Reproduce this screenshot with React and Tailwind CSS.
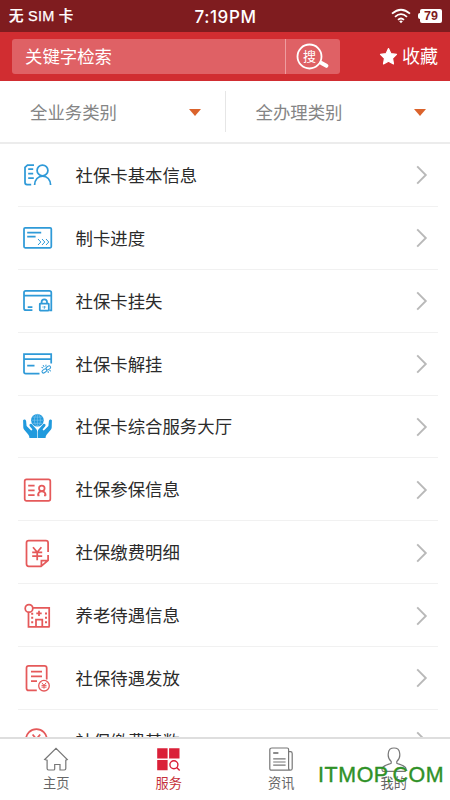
import React, { useState } from 'react';

const services = [
  { name: '社保卡基本信息', icon: 'profile' },
  { name: '制卡进度', icon: 'progress' },
  { name: '社保卡挂失', icon: 'lock' },
  { name: '社保卡解挂', icon: 'unlink' },
  { name: '社保卡综合服务大厅', icon: 'hands' },
  { name: '社保参保信息', icon: 'idcard' },
  { name: '社保缴费明细', icon: 'bill' },
  { name: '养老待遇信息', icon: 'building' },
  { name: '社保待遇发放', icon: 'payout' },
  { name: '社保缴费基数', icon: 'base' },
];

const blueIcons = {
  profile: (
    <>
      <path d="M12 6H5.5L3 8.3v15.2q0 2 2 2h4.2" />
      <path d="M6.2 10.2h5M6.2 14.7h5M6.2 19.2h5.6" />
      <circle cx="20.5" cy="11.4" r="5.4" />
      <path d="M12.6 26c0-5.3 3.6-9 8-9s8 3.7 8 9" />
    </>
  ),
  progress: (
    <>
      <rect x="2" y="5.8" width="27.3" height="20" rx="1.2" />
      <path d="M5.2 10.5h14M5.2 14.6h8.4" />
      <path strokeWidth="1" d="M16 17l2.8 3-2.8 3M20 17l2.8 3-2.8 3M24 17l2.8 3-2.8 3" />
    </>
  ),
  lock: (
    <>
      <path d="M10.4 25.2H4q-2 0-2-2V7.5q0-1.7 1.7-1.7h23.6q2 0 2 2v17.6h-2M2 10.6h27.3M5.7 22h4.7" />
      <rect x="17.8" y="18.6" width="9" height="7" rx=".5" />
      <path d="M19.6 18.5v-1.4a2.7 2.7 0 0 1 5.4 0v1.4" />
      <path strokeWidth="1" d="M20.5 22h.8M23.3 22h.8M22.3 21v2.7" />
    </>
  ),
  unlink: (
    <>
      <path d="M17.5 25.6H3.7Q2 25.6 2 24V6h27.2v9.4M2 11h27.2M5.2 17.6h7.3" />
      <g strokeWidth="1">
        <rect x="19.8" y="21.4" width="5.2" height="3" rx="1.5" transform="rotate(-35 22.4 22.9)" />
        <rect x="23.8" y="18.4" width="5" height="3" rx="1.5" transform="rotate(-35 26.3 19.9)" />
        <path d="M21 17l1.2 2M19.5 19.4l1.7.5M24 16.7l-.2 1.8M26 23l.3 2M27.4 22.4l1.6.7" />
      </g>
    </>
  ),
  hands: (
    <g fill="#209add" stroke="none">
      <circle cx="15.4" cy="9.2" r="6.3" />
      <g fill="none" stroke="#8bcaf0" strokeWidth=".55">
        <path d="M9.5 9.2h11.8M10.5 6.1h9.8M10.5 12.3h9.8M15.4 3.3v11.8" />
        <ellipse cx="15.4" cy="9.2" rx="3" ry="6" />
      </g>
      <path d="M1.1 9.2c.9-1.2 2.9-.6 3 .9l.5 5 4.3 4.2c.8.5 1.8-.4 1.2-1.2l-2.5-3.2c-.6-1.4.9-2.6 2.1-1.8l4.2 4.6c1 1.1 1.3 2.1 1.3 3.4V27H7.4c0-2-.6-3-1.8-4.3l-3.6-4.2c-.5-.6-.6-1.3-.7-2z" />
      <path d="M29.9 9.2c-.9-1.2-2.9-.6-3 .9l-.5 5-4.3 4.2c-.8.5-1.8-.4-1.2-1.2l2.5-3.2c.6-1.4-.9-2.6-2.1-1.8l-4.2 4.6c-1 1.1-1.3 2.1-1.3 3.4V27h7.8c0-2 .6-3 1.8-4.3l3.6-4.2c.5-.6.6-1.3.7-2z" />
    </g>
  ),
};

const redIcons = {
  idcard: (
    <>
      <rect x="2.7" y="5.4" width="25.6" height="21.4" rx="1.8" />
      <path d="M6.2 11.5h6.4M6.2 16.4h6.4M6.2 21h6.4" />
      <circle cx="19.8" cy="14.3" r="2.8" />
      <path d="M15.9 21.6c.2-2.6 1.8-4.2 3.9-4.2s3.7 1.6 3.9 4.2M15.5 21.4h2M22 21.4h2" />
    </>
  ),
  bill: (
    <>
      <path d="M26.1 15V5.7q0-2.2-2.2-2.2H6.7q-2.2 0-2.2 2.2v21.4q0 2.2 2.2 2.2H19l7.1-6v-5.2M19.4 29v-5.4h6.4" />
      <path d="M11 10.2l4.2 5 4.2-5M10.2 15.4h10M10.2 19.2h10M15.2 15.2v8" />
    </>
  ),
  building: (
    <>
      <circle cx="7" cy="8.4" r="3.8" />
      <path d="M11 7.9h16.2v18.9M6.5 12.2v14.6h21.2" />
      <path d="M17 10.7v5.4M14.3 13.4h5.4M14 26.5v-6.8h6.3v6.8" />
      <path strokeWidth="2" d="M9.2 17.8h2M9.2 22.3h2M23 13.4h2M23 17.8h2M23 22.3h2M9.2 13.8h2" />
    </>
  ),
  payout: (
    <>
      <path d="M14.8 28.4H6.7q-2.2 0-2.2-2.2V6q0-2.2 2.2-2.2h15.8q2.2 0 2.2 2.2v11.5" />
      <path d="M9 9.7h11M9 14.4h11M9 19.1h6" />
      <circle cx="22" cy="23.7" r="5.3" strokeWidth="1.3" />
      <path strokeWidth="1" d="M19.8 20.8l2.2 2.5 2.2-2.5M19.5 23.4h5M19.5 25.1h5M22 23.4v3.3" />
    </>
  ),
  base: (
    <>
      <circle cx="14.4" cy="14.4" r="10.4" />
      <path d="M10.6 9.5l3.8 4.6 3.8-4.6M10 14.5h8.8M14.4 14v7" />
    </>
  ),
};

const ServiceIcon = ({ name }) => {
  const isBlue = name in blueIcons;
  return (
    <svg
      className="w-8 h-8 shrink-0"
      viewBox="0 0 32 32"
      fill="none"
      stroke={isBlue ? '#2f9ad8' : '#e5595a'}
      strokeWidth="1.75"
    >
      {isBlue ? blueIcons[name] : redIcons[name]}
    </svg>
  );
};

const StatusBar = () => (
  <div className="h-8 shrink-0 bg-[#7f1c1f] text-white flex items-center justify-between pl-[9px] pr-[8px] font-medium">
    <span className="w-[120px] pt-[2px] text-[14.5px] tracking-[0.25px] [-webkit-text-stroke:0.25px_white]">无 SIM 卡</span>
    <span className="pt-[2px] text-[17px] font-[Inter,sans-serif] tracking-[0.6px] leading-none">7:19PM</span>
    <div className="w-[120px] flex items-center justify-end">
      <svg className="w-5 h-4 mr-[7px]" viewBox="0 0 20 16" fill="none" stroke="white" strokeWidth="1.8">
        <path d="M1 5.7q9-8 18 0M4 8.8q6-5.4 12 0M7 11.8q3-2.7 6 0" />
        <path d="M8.2 13.2q1.8-1.4 3.6 0L10 15.2z" fill="white" stroke="none" />
      </svg>
      <span className="w-[2px] h-[6px] rounded-l bg-white"></span>
      <span className="w-[22px] h-[14px] rounded-[2px] bg-white text-[#7f1c1f] text-[12.5px] leading-[14px] text-center font-bold">79</span>
    </div>
  </div>
);

const SearchHeader = () => (
  <div className="h-[49px] shrink-0 bg-[#d12d31] flex items-center text-white pl-3 pr-[12px]">
    <div className="w-[328px] h-[35px] rounded-[3px] bg-[#df6165] flex items-center">
      <span className="flex-1 pl-[13px] pt-px text-[17.4px]">关键字检索</span>
      <button className="w-[55px] h-full border-l border-[#ee9da0] flex items-center pl-[10px]">
        <svg className="w-[34px] h-[30px]" viewBox="0 0 34 30" fill="none" stroke="white">
          <circle cx="13.5" cy="14.5" r="12" strokeWidth="1.8" />
          <path d="M24 20l2 1" strokeWidth="2" />
          <path d="M25.4 21l5 2.8" strokeWidth="4" strokeLinecap="round" />
          <text x="13.5" y="19.3" textAnchor="middle" fontSize="13" fill="white" stroke="none">搜</text>
        </svg>
      </button>
    </div>
    <button className="ml-auto flex items-center text-[18px]">
      <svg className="w-[19px] h-[19px] mr-[4px]" viewBox="0 0 24 24" fill="white" stroke="white" strokeWidth="1.5" strokeLinejoin="round">
        <path d="M12 2l3.1 6.4 7 1-5 4.9 1.2 7-6.3-3.3-6.3 3.3 1.2-7-5-4.9 7-1z" />
      </svg>
      <span className="pt-px">收藏</span>
    </button>
  </div>
);

const FilterItem = ({ label }) => (
  <div className="flex-1 flex items-center justify-between pl-[30px] pr-[24px] pt-[3px] text-[17.4px] text-[#858585]">
    <span>{label}</span>
    <svg className="w-3 h-[7px]" viewBox="0 0 12 7" fill="#db632c">
      <path d="M0 0h12L6 7z" />
    </svg>
  </div>
);

const tabs = [
  {
    label: '主页',
    icon: (
      <path d="M1.7 12.5L13 1.3l11.3 11.2-1.5.7v8.4q0 1.4-1.4 1.4H17v-5.5h-5.3V22q0 1-1 1H5.5q-1.4 0-1.4-1.4v-8.4z" />
    ),
  },
  {
    label: '服务',
    icon: (
      <g stroke="none" fill="#da2038">
        <path d="M1.2 1.3h10.4v10.2H1.2zM13.1 1.3h10.4v10.2H13.1zM1.2 13h10.4v10.2H1.2z" />
        <g fill="none" stroke="#da2038" strokeWidth="1.4">
          <circle cx="17.9" cy="17.7" r="4" />
          <path d="M20.7 20.6l3 3" />
        </g>
      </g>
    ),
  },
  {
    label: '资讯',
    icon: (
      <>
        <path d="M4 1h15.2q1.4 0 1.4 1.4V21q0 2.2 1.7 2.2H3.6q-1.8 0-1.8-1.8V2.8Q1.8 1 4 1zM20.6 4.6h1.8q1.8 0 1.8 1.8v15q0 1.8-1.9 1.8" />
        <path d="M5.2 6h5.2" strokeWidth="1.7" />
        <path d="M5.2 11.8h12.4M5.2 15h12.4M5.2 18.2h12.4" />
      </>
    ),
  },
  {
    label: '我的',
    icon: (
      <path d="M10.2 14.5C7.5 12.3 6.8 9 7.4 5.8 8-.6 18-.6 18.6 5.8c.6 3.2-.1 6.5-2.8 8.7v1.7c2.8 1.2 7 2.3 8.6 4.2 1 1.6.6 4-.7 4H2.3c-1.3 0-1.7-2.4-.7-4 1.6-1.9 5.8-3 8.6-4.2z" />
    ),
  },
];

const App = () => {
  const [activeTab, setActiveTab] = useState('服务');

  return (
    <div className="relative w-[450px] h-[800px] overflow-hidden bg-white flex flex-col font-['Liberation_Sans','Noto_Sans_CJK_SC',sans-serif]">
      <StatusBar />
      <SearchHeader />

      <div className="h-[63px] shrink-0 flex items-center border-b-2 border-[#ececec]">
        <FilterItem label="全业务类别" />
        <div className="w-px h-[41px] bg-[#e6e6e6]"></div>
        <FilterItem label="全办理类别" />
      </div>

      <div className="flex-1 min-h-0 overflow-hidden pl-[18px] pr-[12px]">
        {services.map((service) => (
          <div key={service.name} className="h-[62.88px] flex items-center border-b border-[#f1f1f1] pt-px pl-[4px] pr-[10px]">
            <ServiceIcon name={service.icon} />
            <span className="flex-1 ml-[21.5px] pt-px text-[17.4px] text-[#2b2b2b]">{service.name}</span>
            <svg className="w-3 h-5" viewBox="0 0 12 20" fill="none" stroke="#b9b9b9" strokeWidth="1.9">
              <path d="M1.2 1.3l8.6 8.7-8.6 8.7" />
            </svg>
          </div>
        ))}
      </div>

      <div className="h-[63px] shrink-0 flex bg-white border-t-2 border-[#dedede]">
        {tabs.map((tab) => (
          <button
            key={tab.label}
            onClick={() => setActiveTab(tab.label)}
            className={`flex-1 flex flex-col items-center pt-[8px] text-[13.2px] leading-[18px] ${activeTab === tab.label ? 'text-[#c5303a]' : 'text-[#666666]'}`}
          >
            <svg className="w-[26px] h-[26px] mb-[2px]" viewBox="0 0 26 26" fill="none" stroke="#777777" strokeWidth="1.2">
              {tab.icon}
            </svg>
            {tab.label}
          </button>
        ))}
      </div>

      <span className="absolute left-[318px] top-[763px] text-[21.4px] leading-6 tracking-[0.6px] text-[#2f9127] [-webkit-text-stroke:0.4px_#2f9127]">ITMOP.COM</span>
    </div>
  );
};

export default App;
